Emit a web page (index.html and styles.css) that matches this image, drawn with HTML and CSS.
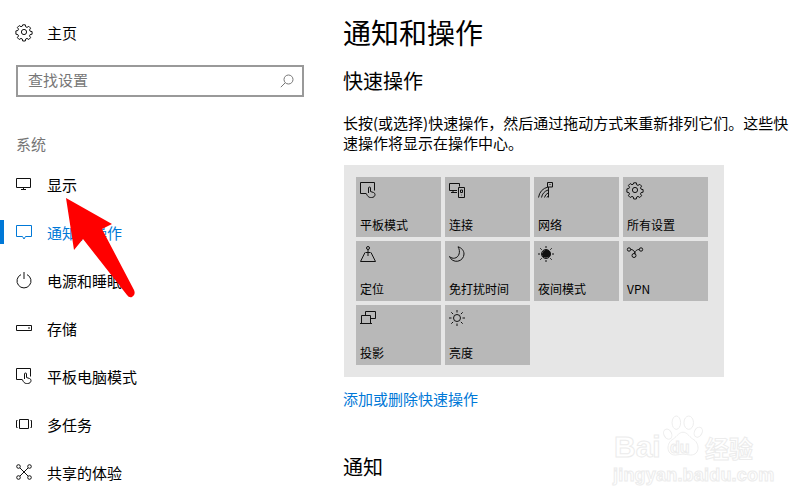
FILE: index.html
```html
<!DOCTYPE html>
<html lang="zh-CN">
<head>
<meta charset="utf-8">
<title>通知和操作</title>
<link rel="stylesheet" href="styles.css">
</head>
<body>
<div class="page">
  <aside class="side">
    <div class="nav-item home">
      <svg class="ico" viewBox="0 0 16 16"><path class="st" d="M6.700.8h2.600l.4 2 1.300.6 1.800-1.100 1.800 1.800-1.100 1.800.6 1.300 2 .4v2.600l-2 .4-.6 1.300 1.100 1.800-1.800 1.800-1.800-1.100-1.300.6-.4 2H6.700l-.4-2-1.300-.6-1.800 1.100-1.800-1.800 1.100-1.800-.6-1.300-2-.4V6.900l2-.4.6-1.300-1.100-1.800 1.800-1.800 1.800 1.100 1.300-.6z"/><circle class="st" cx="8" cy="8" r="2.600"/></svg>
      <span>主页</span>
    </div>
    <div class="search">
      <span>查找设置</span>
      <svg class="search-ico" viewBox="0 0 14 14"><circle cx="8.500" cy="5.500" r="4.500"/><path d="M5.200 8.800L.8 13.200"/></svg>
    </div>
    <div class="group">系统</div>
    <nav class="nav">
      <div class="nav-item">
        <svg class="ico" viewBox="0 0 16 16"><path class="st" d="M.5 2.500h14v9H.5zM7.500 11.500v2.500M5 13.500h5"/></svg>
        <span>显示</span>
      </div>
      <div class="nav-item active">
        <svg class="ico" viewBox="0 0 16 16"><path class="st" d="M.5 1.500h15v11H9.500L8 15l-1.500-2.500H.5z"/></svg>
        <span>通知和操作</span>
      </div>
      <div class="nav-item">
        <svg class="ico" viewBox="0 0 16 16"><path class="st" d="M5 2.600a7 7 0 1 0 6 0M8 0v7"/></svg>
        <span>电源和睡眠</span>
      </div>
      <div class="nav-item">
        <svg class="ico" viewBox="0 0 16 16"><path class="st" d="M.5 5.500h15v5H.5zM12 8h2"/></svg>
        <span>存储</span>
      </div>
      <div class="nav-item">
        <svg class="ico" viewBox="0 0 16 16"><path class="st" d="M6.500 11.500h-6v-11h14v8M8.500 11V6a1 1 0 0 1 2 0v3.500l3 1c1 .4 1.500 1 1.500 2 0 2-1.500 3-3.500 3h-1c-2 0-3-1.500-4-3.500"/></svg>
        <span>平板电脑模式</span>
      </div>
      <div class="nav-item">
        <svg class="ico" viewBox="0 0 16 16"><path class="st" d="M3.500 3.500h9v9h-9zM1.500 4.500H.5v7h1M14.500 4.500h1v7h-1"/></svg>
        <span>多任务</span>
      </div>
      <div class="nav-item">
        <svg class="ico" viewBox="0 0 16 16"><circle class="st" cx="2.500" cy="2.500" r="1.800"/><circle class="st" cx="13.500" cy="2.500" r="1.800"/><circle class="st" cx="2.500" cy="13.500" r="1.800"/><circle class="st" cx="13.500" cy="13.500" r="1.800"/><path class="st" d="M4 4l8 8M12 4l-8 8"/></svg>
        <span>共享的体验</span>
      </div>
    </nav>
  </aside>

  <main class="main">
    <h1 class="title">通知和操作</h1>
    <h2 class="sub">快速操作</h2>
    <p class="desc">长按(或选择)快速操作，然后通过拖动方式来重新排列它们。这些快速操作将显示在操作中心。</p>
    <div class="panel">
      <div class="tile">
        <svg class="tile-ico" viewBox="0 0 16 16"><path class="st" d="M6.500 11.500h-6v-11h14v8M8.500 11V6a1 1 0 0 1 2 0v3.500l3 1c1 .4 1.500 1 1.500 2 0 2-1.500 3-3.500 3h-1c-2 0-3-1.500-4-3.500"/></svg>
        <span>平板模式</span>
      </div>
      <div class="tile">
        <svg class="tile-ico" viewBox="0 0 16 16"><path class="st" d="M8 8.500H.5v-7h10v3M4 8.500v2M2 10.500h6M9.500 5.500h6v10h-6zM11.500 8h2v2.500h-2zM12.500 13h.5"/></svg>
        <span>连接</span>
      </div>
      <div class="tile">
        <svg class="tile-ico" viewBox="0 0 16 16"><path class="st" d="M.5 15.500A13 13 0 0 1 10 5M3.500 15.500A10 10 0 0 1 10 8M6.500 15.500A7 7 0 0 1 10 11M9 15.500A4 4 0 0 1 10 14M10.500 15.500V5M9.500 .5h5v4.500h-5zM11.500 2.500h1"/></svg>
        <span>网络</span>
      </div>
      <div class="tile">
        <svg class="tile-ico" viewBox="0 0 16 16"><path class="st" d="M6.700.8h2.600l.4 2 1.300.6 1.800-1.100 1.800 1.800-1.100 1.800.6 1.300 2 .4v2.600l-2 .4-.6 1.300 1.100 1.800-1.800 1.800-1.800-1.100-1.300.6-.4 2H6.700l-.4-2-1.300-.6-1.800 1.100-1.800-1.800 1.100-1.800-.6-1.300-2-.4V6.900l2-.4.6-1.300-1.100-1.800 1.800-1.800 1.800 1.100 1.300-.6z"/><circle class="st" cx="8" cy="8" r="2.600"/></svg>
        <span>所有设置</span>
      </div>
      <div class="tile">
        <svg class="tile-ico" viewBox="0 0 16 16"><circle class="st" cx="8" cy="2" r="1.500"/><path class="st" d="M8 3.500V10M5.500 6.500h5M5 6.500L.5 15.500h15L11 6.500"/></svg>
        <span>定位</span>
      </div>
      <div class="tile">
        <svg class="tile-ico" viewBox="0 0 16 16"><path class="st" d="M9 .8c3.500 1 6 3.700 6 7.200a7.500 7.500 0 0 1-14.500 2.500C2 12 4 12.500 5.500 12.200 10 11.500 12 5.500 9 .8z"/></svg>
        <span>免打扰时间</span>
      </div>
      <div class="tile">
        <svg class="tile-ico" viewBox="0 0 16 16"><circle class="st" cx="8" cy="8" r="4.500"/><path class="fl" d="M5 11a4.500 4.500 0 0 1 5.500-6.800A4.500 4.500 0 0 1 12 10a6 6 0 0 1-7 1z"/><path class="st" d="M8 0v2M8 14v2M0 8h2M14 8h2M2.300 2.300l1.400 1.400M12.300 12.300l1.400 1.400M13.700 2.300l-1.400 1.400M3.700 12.300l-1.400 1.400"/></svg>
        <span>夜间模式</span>
      </div>
      <div class="tile">
        <svg class="tile-ico" viewBox="0 0 16 16"><circle class="st" cx="2" cy="3.500" r="1.700"/><circle class="st" cx="14" cy="3.500" r="1.700"/><circle class="st" cx="7" cy="9.500" r="2"/><path class="st" d="M3.700 3.500c2 0 3 1 4 2.500 1 1 .6 2-.2 1.700M12.300 3.500c-2.500 0-3.800 1.200-5.300 4"/></svg>
        <span>VPN</span>
      </div>
      <div class="tile">
        <svg class="tile-ico" viewBox="0 0 16 16"><path class="st" d="M5.500 5V1.500h10v7H11M1.500 13V5.500h9V13M0 13.500h12"/></svg>
        <span>投影</span>
      </div>
      <div class="tile">
        <svg class="tile-ico" viewBox="0 0 16 16"><circle class="st" cx="8" cy="8" r="3.500"/><path class="st" d="M8 0v2.500M8 13.500V16M0 8h2.500M13.500 8H16M2.300 2.300l1.800 1.800M11.900 11.900l1.800 1.800M13.700 2.300l-1.800 1.800M4.100 11.900l-1.800 1.800"/></svg>
        <span>亮度</span>
      </div>
    </div>
    <a class="link">添加或删除快速操作</a>
    <h2 class="sub notify">通知</h2>
  </main>
</div>

<svg class="arrow" viewBox="0 0 800 500"><path d="M66 198L112 224 102 229 134 290Q136 295 132 297 129 298 127 295L83 239 74 250z"/></svg>

<div class="mark">
  <svg class="paw" viewBox="0 0 42 44"><ellipse cx="5" cy="20" rx="4" ry="5.500" transform="rotate(-25 5 20)"/><ellipse cx="14" cy="8" rx="4.500" ry="7"/><ellipse cx="27" cy="8" rx="5" ry="7"/><ellipse cx="37" cy="18" rx="4" ry="5.500" transform="rotate(25 37 18)"/><path d="M21 18c4 0 6 4 10 7 8 4 8 17-2 17-3 0-5-1-8-1s-5 1-8 1c-10 0-10-13-2-17 4-3 6-7 10-7z"/></svg>
  <span class="mark-bai">Bai</span>
  <span class="mark-du">du</span>
  <span class="mark-cn">经验</span>
  <span class="mark-url">jingyan.baidu.com</span>
</div>
</body>
</html>
```
FILE: styles.css
```css
* { box-sizing: border-box; }
html, body { margin: 0; height: 100%; }
body {
  width: 800px;
  height: 500px;
  overflow: hidden;
  background: #fff;
  color: #000;
  font-family: "Noto Sans CJK SC", "Liberation Sans", sans-serif;
  font-size: 15px;
  position: relative;
}
.page { display: flex; height: 500px; overflow: hidden; }
.side { width: 344px; flex: none; padding-top: 8px; }
.nav-item {
  height: 48px;
  display: flex;
  align-items: center;
  gap: 15px;
  padding-left: 16px;
  position: relative;
}
.ico { width: 16px; height: 16px; flex: none; overflow: visible; }
.st { fill: none; stroke: #111; stroke-width: 1; }
.fl { fill: #111; stroke: none; }
.search {
  margin: 9px 0 0 16px;
  width: 288px;
  height: 32px;
  border: 2px solid #999;
  display: flex;
  align-items: center;
  justify-content: space-between;
  padding: 0 8px 4px 10px;
  color: #777;
}
.search-ico { width: 14px; height: 14px; fill: none; stroke: #777; stroke-width: 1; margin-top: 4px; }
.group { margin: 36px 0 0 16px; height: 22px; line-height: 22px; color: #767676; }
.nav { margin-top: 5px; }
.active { color: #0078d7; }
.active .st { stroke: #0078d7; }
.active::before {
  content: "";
  position: absolute;
  left: 0;
  top: 12px;
  width: 4px;
  height: 24px;
  background: #0078d7;
}
.main { width: 456px; flex: none; }
.title { margin: 12px 0 0 -1px; font-size: 28px; font-weight: 400; line-height: 40px; }
.sub { margin: 14px 0 0 -1px; font-size: 20px; font-weight: 400; line-height: 30px; }
.desc { margin: 17px 0 0 -1px; width: 448px; font-size: 15px; line-height: 20px; }
.panel {
  margin-top: 12px;
  width: 380px;
  padding: 12px;
  background: #e6e6e6;
  display: grid;
  grid-template-columns: repeat(4, 85px);
  grid-auto-rows: 60px;
  gap: 4px;
}
.tile {
  background: #b8b8b8;
  padding: 5px 4px 3px;
  display: flex;
  flex-direction: column;
  justify-content: space-between;
  font-size: 12px;
  line-height: 18px;
}
.tile-ico { width: 16px; height: 16px; overflow: visible; }
.link { display: block; margin: 11px 0 0 -1px; line-height: 22px; color: #0078d7; }
.notify { margin-top: 42px; }
.arrow { position: absolute; left: 0; top: 0; width: 800px; height: 500px; fill: #f00; }
.mark { position: absolute; left: 613px; top: 414px; width: 150px; height: 76px; color: #fff; }
.mark span { position: absolute; -webkit-text-stroke: 1px #ececec; font-family: "Liberation Sans", sans-serif; font-weight: 700; white-space: nowrap; }
.paw {
  position: absolute;
  left: 50px;
  top: 0;
  width: 40px;
  height: 44px;
  fill: #fff;
  stroke: #ececec;
  stroke-width: 1;
}
.mark .mark-bai { left: 1px; top: 16px; font-size: 30px; line-height: 34px; letter-spacing: 0; }
.mark .mark-du { left: 57px; top: 24px; font-size: 16px; line-height: 20px; }
.mark .mark-cn { left: 92px; top: 17px; font-family: "Noto Sans CJK SC", sans-serif; font-size: 24px; line-height: 34px; }
.mark .mark-url { left: 0; top: 51px; font-size: 18px; line-height: 20px; letter-spacing: .2px; }
```
